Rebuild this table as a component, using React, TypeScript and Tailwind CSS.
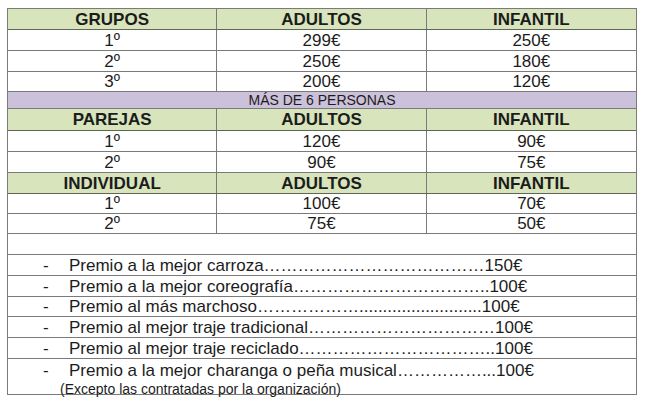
import React from 'react'

type Row = { label: string; adultos: string; infantil: string; h: string }

interface Section {
  title: string
  rows: Row[]
  headerH: string
}

const sections: Section[] = [
  {
    title: 'GRUPOS',
    headerH: 'h-[21px]',
    rows: [
      { label: '1º', adultos: '299€', infantil: '250€', h: 'h-[21px]' },
      { label: '2º', adultos: '250€', infantil: '180€', h: 'h-[21px]' },
      { label: '3º', adultos: '200€', infantil: '120€', h: 'h-[20px]' },
    ],
  },
  {
    title: 'PAREJAS',
    headerH: 'h-[22px]',
    rows: [
      { label: '1º', adultos: '120€', infantil: '90€', h: 'h-[21px]' },
      { label: '2º', adultos: '90€', infantil: '75€', h: 'h-[21px]' },
    ],
  },
  {
    title: 'INDIVIDUAL',
    headerH: 'h-[21px]',
    rows: [
      { label: '1º', adultos: '100€', infantil: '70€', h: 'h-[20px]' },
      { label: '2º', adultos: '75€', infantil: '50€', h: 'h-[20px]' },
    ],
  },
]

// dot leaders written out as in the original document
const prizes = [
  { text: 'Premio a la mejor carroza' + '…'.repeat(13) + '150€', h: 'h-[21px]' },
  { text: 'Premio a la mejor coreografía' + '…'.repeat(11) + '..100€', h: 'h-[21px]' },
  { text: 'Premio al más marchoso' + '…'.repeat(6) + '.'.repeat(26) + '100€', h: 'h-[20px]' },
  { text: 'Premio al mejor traje tradicional' + '…'.repeat(11) + '100€', h: 'h-[21px]' },
  { text: 'Premio al mejor traje reciclado' + '…'.repeat(11) + '..100€', h: 'h-[21px]' },
]

function Cell({ children, last }: { children: React.ReactNode; last?: boolean }) {
  return (
    <div className={`flex items-center justify-center ${last ? '' : 'border-r border-[#7a7a7a]'}`}>
      {children}
    </div>
  )
}

function PrizeLine({ text }: { text: string }) {
  return (
    <div className="flex items-center whitespace-nowrap">
      <span className="w-[31px] pl-[5px]">-</span>
      <span>{text}</span>
    </div>
  )
}

export default function App() {
  return (
    <div
      className="w-[650px] h-[407px] bg-white pt-[8px] pl-[7px] text-[#1c1c1c]"
      style={{ fontFamily: '"Liberation Sans", Arial, sans-serif' }}
    >
      <div className="w-[630px] border border-[#7a7a7a]">
        {sections.map((section, i) => (
          <div key={section.title}>
            {/* Header */}
            <div
              className={`grid grid-cols-3 ${section.headerH} bg-[#d7e4bc] border-b border-[#5e6656] text-[17px] font-bold leading-none`}
            >
              <Cell>{section.title}</Cell>
              <Cell>ADULTOS</Cell>
              <Cell last>INFANTIL</Cell>
            </div>

            {section.rows.map((row) => (
              <div
                key={section.title + row.label}
                className={`grid grid-cols-3 ${row.h} border-b border-[#7a7a7a] text-[17px] leading-none`}
              >
                <Cell>{row.label}</Cell>
                <Cell>{row.adultos}</Cell>
                <Cell last>{row.infantil}</Cell>
              </div>
            ))}

            {i === 0 && (
              <div className="flex h-[17px] items-center justify-center bg-[#ccc1da] border-b border-[#7a7a7a] text-[14px] leading-none">
                MÁS DE 6 PERSONAS
              </div>
            )}
          </div>
        ))}

        {/* Empty spacer row */}
        <div className="h-[21px] border-b border-[#7a7a7a]" />

        {/* Special prizes */}
        <div className="text-[17px] leading-none">
          {prizes.map((p) => (
            <div key={p.text} className={`flex ${p.h} items-center border-b border-[#7a7a7a] pl-[30px]`}>
              <PrizeLine text={p.text} />
            </div>
          ))}
          <div className="flex h-[35px] flex-col pl-[30px] pt-[3px]">
            <PrizeLine text={'Premio a la mejor charanga o peña musical' + '…'.repeat(5) + '...100€'} />
            <div className="mt-[3px] ml-[22px] text-[14px] leading-none">
              (Excepto las contratadas por la organización)
            </div>
          </div>
        </div>
      </div>
    </div>
  )
}
